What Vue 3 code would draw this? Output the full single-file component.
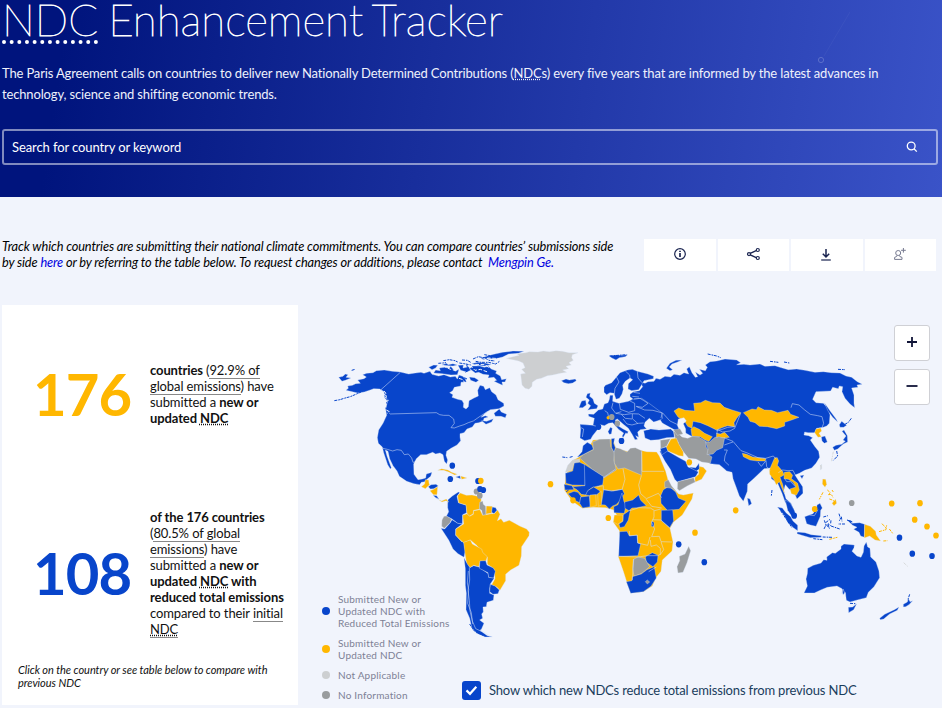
<script setup>
import { ref } from 'vue'

const reduced = ref(true)

const legend = [
  { tone: 'blue', label: 'Submitted New or Updated NDC with Reduced Total Emissions' },
  { tone: 'gold', label: 'Submitted New or Updated NDC' },
  { tone: 'pale', label: 'Not Applicable' },
  { tone: 'grey', label: 'No Information' }
]

// Each region has its own origin; coordinates are in thirds of a pixel.
const regions = [
  {
    name: 'europe-asia', x: 550, y: 350,
    land: [
      ['blue', '240,152 248,146 240,140 240,133 250,125 268,122 278,110 270,95 285,100 294,95 312,94 318,85 330,88 345,79 362,81 372,73 390,76 402,68 416,72 410,57 418,50 426,68 436,82 443,80 436,66 450,75 458,70 448,58 466,62 472,52 466,45 480,35 500,33 525,27 560,30 572,38 560,44 582,43 600,45 630,42 645,49 675,47 690,52 715,59 740,57 765,61 795,67 820,65 845,68 870,69 888,78 905,82 922,95 937,103 921,105 924,112 905,114 912,135 912,160 914,173 900,162 885,145 876,125 878,110 868,108 865,116 848,112 842,123 798,125 788,148 798,158 820,160 834,175 840,195 838,220 830,228 820,232 800,235 794,248 774,248 764,246 762,255 776,257 788,263 781,270 795,290 806,304 809,322 798,340 785,354 764,361 748,370 735,375 744,389 758,410 759,430 741,447 737,438 730,425 717,417 706,404 701,422 708,446 723,460 732,480 731,498 719,480 705,455 696,430 683,400 664,386 662,354 642,356 628,370 609,388 593,402 592,424 580,454 568,438 558,410 549,386 546,367 530,363 519,353 508,344 480,341 466,317 450,303 445,270 400,245 376,241 338,220 290,208 265,200'],
      ['blue', '115,192 131,193 145,180 158,177 163,162 174,158 178,148 180,136 189,136 188,154 207,160 235,154 252,147 275,145 300,162 335,188 338,205 313,220 292,236 271,239 263,246 266,262 257,257 263,268 255,269 247,254 235,235 219,222 202,207 196,210 202,226 218,236 235,245 231,252 228,248 220,262 216,259 221,249 207,239 188,218 176,220 163,227 147,223 144,237 128,257 122,268 104,272 90,264 92,238 90,223 129,226 133,205 116,199'],
      ['blue', '162,112 166,106 185,98 200,80 210,68 232,60 247,58 262,64 294,72 311,79 310,86 282,92 274,106 266,119 245,122 234,117 235,101 248,89 240,84 226,94 218,106 220,118 216,132 208,145 198,148 192,130 180,128 170,134 162,127'],
      ['blue', '112,131 121,129 119,139 129,147 133,160 144,167 140,176 123,178 113,181 122,167 113,160 118,150 108,142'],
      ['blue', '91,162 95,153 107,151 109,165 98,173 87,173'],
      ['blue', '34,92 48,87 58,90 76,87 79,92 68,99 55,101 42,98'],
      ['blue', '178,17 200,15 214,16 233,14 226,20 208,23 198,30 184,23'],
      ['blue', '349,55 360,40 378,31 396,30 385,35 366,42 358,51 368,59 360,62'],
      ['blue', '281,242 302,237 327,240 362,237 371,245 373,262 350,263 325,269 302,271 285,264'],
      ['blue', '208,265 220,263 222,275 214,282 207,276'],
      ['blue', '174,245 181,232 187,235 184,252 178,253'],
      ['gold', '372,183 386,174 405,181 434,183 431,160 452,158 466,151 488,158 510,159 523,172 546,180 573,188 560,205 552,218 554,230 533,227 519,232 499,240 473,227 451,218 429,214 426,235 413,229 404,214 384,201'],
      ['sea', '385,207 402,203 409,213 400,221 407,237 407,255 396,257 389,242 382,226'],
      ['gold', '423,238 431,230 448,238 464,250 487,260 477,274 465,270 451,260 426,259'],
      ['gold', '500,250 511,252 524,247 538,262 518,265 507,260 499,263'],
      ['gold', '580,188 606,177 619,179 624,170 643,180 664,181 683,188 714,181 722,193 747,202 725,210 704,217 704,228 680,236 652,230 628,229 615,218 600,214 594,202'],
      ['grey', '371,244 383,248 396,261 413,265 428,259 447,261 467,274 468,291 475,300 477,315 486,321 481,340 455,336 438,327 416,325 399,304 385,282 375,263'],
      ['grey', '467,275 479,276 495,262 524,263 521,278 518,293 500,301 489,312 471,314 474,298'],
      ['grey', '370,240 390,236 399,252 382,256'],
      ['gold', '577,310 590,313 608,321 627,323 648,326 645,333 622,333 600,330 580,320'],
      ['gold', '668,337 674,323 682,323 686,333 682,346 698,364 702,375 690,382 698,403 704,432 696,415 688,395 679,405 671,388 659,373 658,360'],
      ['gold', '703,367 719,365 728,376 724,386 743,400 748,420 739,436 724,431 720,417 738,411 729,397 715,388 702,386'],
      ['gold', '794,248 798,237 812,234 815,243 807,250 814,260 804,262'],
      ['blue', '814,261 825,258 832,276 823,280 816,273'],
      ['blue', '848,292 858,286 875,283 886,274 879,270 888,258 876,244 882,240 892,257 893,276 880,282 863,297 853,301'],
      ['blue', '868,224 875,214 890,226 881,232 870,232'],
      ['blue', '823,158 840,182 859,208 863,216 848,202 834,183'],
      ['blue', '592,444 600,447 605,461 596,467'],
      ['blue', '750,377 762,375 756,386'],
      ['pale', '811,347 815,342 815,357 811,360'],
      ['sea', '285,217 298,205 311,216 331,210 340,224 331,236 307,234 292,239 282,228']
    ],
    borders: [
      'M189,158 185,174 197,190 214,185M208,160 211,178 236,187 254,182 254,160 240,153M252,147 270,145 280,151 294,160 277,172 258,169M198,190 223,194 244,191 266,192 285,205M164,182 173,188 177,206M247,192 247,206 263,220 281,219M214,193 226,205 246,207M219,207 231,222 246,225 264,220M250,127 270,130M247,139 267,141M93,233 101,237 97,261M129,226 147,231M199,80 207,96 195,115 193,132M226,63 239,75 240,84M262,64 264,84 276,98M260,170 284,180 309,181 337,189 333,204M374,262 386,279M337,188 360,213 383,224',
      'M723,173 727,161 747,165 763,179 781,193 803,197 816,200 821,220 816,233M499,241 514,239 533,232 554,230M500,252 503,239 518,246 540,243 554,235 572,190M524,264 549,274 565,293 573,302 590,308 624,323 647,325 670,318 678,327M523,285 540,279 549,276M522,300 532,300 525,318 523,333 537,346M624,336 634,349 648,332 650,350 660,362M685,368 698,360 714,362 729,361 736,375M704,386 710,395 722,395 736,410'
    ],
    islands: ['M473,12 500,18 512,23M660,34 685,37M702,36 718,39M864,58 885,59M179,18 230,14', 'M904,205 895,217 885,223M860,303 863,318 850,331M666,420 664,438']
  },
  {
    name: 'north-america', x: 325, y: 340,
    land: [
      ['blue', '63,151 70,145 68,138 82,136 92,131 106,130 98,120 117,116 124,111 113,104 125,100 144,98 154,92 178,90 202,94 226,96 251,102 271,99 288,97 297,100 315,94 321,103 341,108 357,104 376,111 391,109 397,117 402,105 413,109 421,116 424,126 408,127 407,138 388,142 383,152 374,158 384,164 381,172 398,178 411,181 416,190 415,202 423,207 430,200 432,182 447,174 460,168 458,151 465,136 476,139 481,149 494,143 500,155 513,165 519,179 536,190 537,198 522,206 496,209 481,219 468,232 481,227 490,231 477,235 475,243 461,248 450,250 442,261 426,267 417,278 405,281 405,291 407,302 396,315 378,325 365,334 363,346 368,360 365,372 358,364 354,344 345,339 332,342 323,337 304,344 287,344 274,356 266,372 267,403 279,419 292,417 302,414 304,402 321,397 317,409 306,418 300,425 289,427 284,434 267,431 245,424 223,409 216,393 204,377 194,356 189,334 181,330 186,348 199,383 196,387 188,374 176,338 172,321 160,310 157,293 161,270 174,250 185,226 182,208 188,184 179,173 177,155 164,147 146,146 136,150 118,156 98,159'],
      ['blue', '41,112 54,109 61,102 69,104 63,112 78,114 61,121 51,124'],
      ['blue', '311,82 326,75 338,76 332,84 321,89'],
      ['blue', '326,99 332,90 346,92 343,84 359,82 373,85 377,79 390,94 402,88 397,104 378,105 352,101'],
      ['blue', '350,75 365,70 369,74 384,71 397,75 384,78 372,77'],
      ['blue', '399,76 415,75 414,84 431,80 437,91 425,96 407,91'],
      ['blue', '434,86 443,78 465,78 478,82 490,79 499,87 515,93 512,100 526,108 530,119 544,116 540,126 531,126 533,136 518,129 507,124 515,121 507,112 489,114 492,105 474,103 461,97 451,99'],
      ['blue', '433,111 449,113 461,121 453,127 437,121'],
      ['blue', '468,54 487,48 506,43 533,37 564,33 597,34 580,40 551,42 533,51 509,57 486,55 474,60'],
      ['blue', '440,71 457,67 484,70 499,74 478,78 458,76'],
      ['blue', '507,220 523,207 529,216 545,223 541,233 528,229 511,229'],
      ['blue', '470,242 485,244 505,236 500,246 483,253'],
      ['gold', '338,391 350,386 369,390 380,397 397,403 389,405 371,396 356,391'],
      ['blue', '392,411 405,407 407,416'],
      ['gold', '407,408 426,414 410,418'],
      ['gold', '289,440 299,432 301,419 311,420 312,429 314,434 301,446'],
      ['blue', '310,440 318,434 333,433 340,438 327,446 316,447'],
      ['gold', '315,452 326,448 338,440 336,464 325,464'],
      ['blue', '324,466 335,467 342,478 333,474']
    ],
    borders: ['M226,97 168,149 178,158M191,218 195,222 334,218 344,224 356,226 372,226 386,237 388,250 378,263 388,264 404,258 417,254 430,248 445,243 465,229 490,213M174,325 187,328 203,333 216,329 229,331 238,344 250,342 260,354 264,367 270,366'],
    islands: [
      'M28,182 45,179 57,175 76,170 90,164 113,154M80,91 90,88',
      'M355,62 373,59 390,62 398,66M340,70 363,68M411,60 427,61 437,67M403,69 423,72 440,76M444,57 460,50 480,54 492,61 510,63M452,64 468,67 491,67 512,72 525,63M478,44 501,48 517,45M446,85 455,94 472,93 481,99M418,113 428,118M425,74 430,91 421,97',
      'M182,151 187,160 182,165 189,174 185,188 189,199M181,204 190,211 194,220'
    ],
    specks: ['M177,153 183,160 177,162 188,171 181,171 190,181 183,185M184,210 193,215 187,220M402,115 414,119 421,132 435,127 456,130M348,65 380,65M354,77 376,88 399,93M435,76 450,91 466,88 488,96M470,58 492,54 525,56M451,73 480,74 493,84']
  },
  {
    name: 'greenland', x: 430, y: 342,
    land: [['pale', '229,49 249,44 267,40 260,35 287,32 298,29 324,30 340,27 358,29 378,26 397,28 417,32 444,32 427,38 425,47 430,55 417,62 424,69 408,73 416,80 398,84 410,91 391,94 368,99 352,101 334,109 320,112 307,121 306,133 297,142 285,139 276,129 274,113 272,96 286,94 275,82 285,77 279,63 266,57 248,53']],
    borders: [], islands: []
  },
  {
    name: 'south-america', x: 420, y: 460,
    land: [
      ['blue', '83,132 84,119 97,108 115,96 119,98 111,109 115,128 139,136 140,158 128,164 127,192 113,190 96,177 79,169 86,155 83,143'],
      ['gold', '113,107 121,99 139,106 156,105 166,107 177,110 184,119 180,135 179,148 161,151 159,162 147,169 141,160 138,135 116,128'],
      ['grey', '179,127 188,123 190,133 197,139 198,165 188,166 185,151 178,147'],
      ['gold', '199,138 217,139 215,160 198,162'],
      ['blue', '217,141 227,143 231,151 222,161 215,157'],
      ['grey', '66,180 72,169 79,168 95,177 90,188 73,205 65,199'],
      ['blue', '63,205 74,207 91,188 96,179 113,190 127,192 107,207 107,226 125,245 131,245 136,272 132,292 114,281 99,267 86,240'],
      ['gold', '131,192 128,166 141,161 149,169 160,163 161,152 180,149 188,166 214,161 223,161 233,150 240,163 232,182 243,176 251,187 268,181 283,189 299,198 320,207 328,217 327,227 319,239 305,260 304,288 297,316 272,330 257,343 257,362 240,391 230,381 215,374 225,356 222,326 202,313 202,292 187,278 170,256 151,240 131,248 121,240 107,225 108,207'],
      ['gold', '131,247 151,240 157,252 185,267 188,277 202,290 198,303 181,303 176,320 161,316 150,323 140,312 136,287'],
      ['blue', '132,293 142,312 150,323 161,317 176,321 205,341 206,352 223,354 211,372 209,387 209,400 222,405 220,421 201,427 199,440 189,441 190,456 185,462 188,475 179,480 192,490 185,506 181,512 202,527 217,531 196,531 170,520 155,502 149,475 138,449 139,400 136,376 136,326'],
      ['blue', '180,303 197,302 201,315 220,324 226,334 221,354 206,352 204,338 178,325'],
      ['blue', '211,373 225,378 238,390 234,401 219,403 209,395'],
      ['gold', '48,114 56,119 65,123 79,117 86,126 78,122 66,126']
    ],
    borders: ['M148,323 149,360 144,391 148,421 150,453 157,483 167,506 184,514M145,333 142,369 146,389 143,430 154,458 158,492M180,509 195,519 209,528'],
    islands: ['M149,492 161,511 178,521 194,528']
  },
  {
    name: 'africa', x: 550, y: 425,
    land: [
      ['gold', '84,98 100,86 118,66 129,45 188,43 198,70 236,80 247,69 270,76 291,80 320,81 328,93 347,139 354,164 363,184 386,207 400,210 430,204 426,222 397,270 370,292 360,310 369,351 366,378 337,405 333,439 317,459 307,483 280,500 242,504 231,473 220,439 205,395 214,364 208,317 190,292 200,270 191,255 168,248 131,247 97,250 66,228 43,195 47,152 66,107'],
      ['grey', '89,99 101,88 130,74 128,51 148,43 180,42 182,65 194,84 192,105 199,135 163,158 128,134'],
      ['grey', '192,78 199,68 211,71 231,81 241,70 256,68 275,77 275,151 224,129 204,132 193,114'],
      ['blue', '82,96 96,80 99,62 112,52 126,60 130,73 101,88 87,95'],
      ['pale', '68,105 89,101 89,111 72,115 66,136 45,143 53,121'],
      ['blue', '73,114 89,112 105,119 105,181 67,180 48,175 46,145 68,138'],
      ['blue', '103,118 161,155 158,179 145,183 128,187 115,196 108,210 94,208 82,195 66,185 105,182'],
      ['blue', '184,41 194,40 191,55 196,68 192,81 185,68'],
      ['blue', '42,178 66,182 72,194 45,195'],
      ['blue', '54,206 72,199 84,202 93,214 89,233 72,225'],
      ['blue', '92,216 118,213 121,245 98,249 89,235'],
      ['blue', '107,210 113,197 131,186 149,197 151,207 120,212'],
      ['gold', '120,210 137,209 139,242 120,247'],
      ['gold', '143,206 154,199 155,240 145,244'],
      ['blue', '161,194 190,198 217,193 223,206 209,228 198,239 188,243 178,252 166,240 154,239'],
      ['blue', '216,204 222,230 228,239 223,265 192,263 191,245 204,239'],
      ['blue', '224,231 248,225 266,210 272,226 289,242 261,248 246,249 237,257 225,250'],
      ['blue', '220,269 241,255 235,285 223,305 210,308 207,297 219,289'],
      ['gold', '193,270 218,270 218,288 202,298 190,290'],
      ['blue', '333,235 332,212 340,194 357,184 377,201 385,219 408,229 387,253 352,256'],
      ['blue', '334,256 368,255 371,288 359,308 334,287'],
      ['blue', '209,320 231,319 238,333 261,330 263,354 272,357 264,392 206,394'],
      ['blue', '286,395 307,383 324,391 322,411 309,425 289,412'],
      ['grey', '250,403 264,396 284,400 299,425 277,444 252,454 248,431'],
      ['blue', '229,470 246,467 247,455 274,447 291,434 313,425 317,449 319,459 303,484 280,500 242,505'],
      ['grey', '286,470 292,465 299,471 292,477'],
      ['grey', '344,170 355,164 365,183 383,204 366,190 344,187'],
      ['grey', '416,364 422,377 411,413 399,442 384,444 381,425 389,407 388,394 405,387'],
      ['blue', '329,79 349,76 385,97 407,109 414,126 434,133 445,141 437,155 410,163 382,171 374,163 361,133 345,109'],
      ['grey', '331,46 361,41 350,64 332,72'],
      ['blue', '331,71 350,65 354,77 335,90'],
      ['gold', '363,42 379,39 386,56 400,81 400,94 387,92 354,78 349,67'],
      ['grey', '383,170 431,158 436,171 413,182 388,197 382,191'],
      ['gold', '447,124 460,127 470,138 455,163 436,171 434,158 446,148'],
      ['blue', '417,126 437,128 447,115 448,132 439,138'],
      ['blue', '305,289 312,292 312,306 304,304']
    ],
    borders: [
      'M275,80 276,139 342,139M274,152 266,180 272,206 289,221 325,205 335,218M219,131 225,163 216,195M160,158 197,132M140,186 160,182 160,194 184,198 215,193M289,223 305,244 335,249M239,257 267,248 301,249 314,257 332,252M312,257 312,276 305,292 314,312 305,335 328,334 333,349M238,318 239,332 262,331 263,354 293,361 300,336M301,345 303,364 319,360 331,370 331,389 341,374 333,350 366,351M331,388 323,392 293,392 264,396 206,394M251,402 247,465M308,284 333,285 359,309M296,440 319,426'
    ],
    islands: ['M37,96 52,98M59,97 70,94M56,195 46,202']
  },
  {
    name: 'oceania', x: 760, y: 440,
    land: [
      ['blue', '52,201 67,204 78,218 92,230 99,243 113,256 113,272 101,264 84,248 72,225'],
      ['blue', '76,180 90,188 104,213 108,234 95,229 83,211'],
      ['blue', '112,276 135,278 154,284 184,287 184,292 151,293 123,285 111,281'],
      ['blue', '134,230 148,225 159,221 170,205 171,195 180,190 187,204 182,211 181,229 174,245 168,259 151,255 140,251'],
      ['gold', '188,117 197,118 200,133 195,142 187,132'],
      ['gold', '216,190 227,177 230,190 222,197'],
      ['blue', '261,240 273,241 275,250 299,248 314,253 313,292 302,288 297,277 281,268 291,262 278,256'],
      ['gold', '314,253 331,259 347,274 349,285 362,303 345,300 329,288 313,294'],
      ['blue', '143,385 160,376 183,369 191,359 201,361 200,351 217,338 226,340 243,327 243,319 252,312 283,315 282,323 276,334 291,348 303,352 310,337 312,318 319,306 323,321 330,325 332,351 348,366 357,393 359,413 342,440 325,457 319,473 295,479 270,486 259,481 256,457 249,464 246,446 231,438 202,442 184,449 163,459 132,459 142,438 138,417 142,401'],
      ['blue', '265,502 278,501 290,491 281,509 266,518'],
      ['blue', '430,493 442,486 445,475 450,485 458,482 447,494 437,500 430,501'],
      ['blue', '359,535 374,523 403,509 417,501 412,511 389,522 371,537 361,539']
    ],
    borders: ['M148,225 163,227 174,209', 'M243,462 249,447 256,463'],
    islands: ['M193,241 198,255 192,267M197,248 210,238M199,254 208,265 203,250 212,257M190,231 204,227M237,221 242,238 237,242M244,230 246,244M213,258 239,267M62,212 95,262M188,291 217,292M212,250 213,240M261,240 278,246M449,463 444,478M255,252 235,252M160,296 187,299M270,490 286,491'],
    goldIslands: ['M202,150 211,158 205,164 214,163 219,172M208,177 220,181 226,190M189,157 178,178M357,275 378,269 380,256M366,251 378,264M388,267 398,280M370,303 383,302M208,298 232,292M216,150 220,156'],
    paleIslands: ['M181,75 185,83M431,368 443,379M220,35 214,66']
  }
]

// [tone, cx, cy, size] in page pixels
const dots = [
  ['blue', 452.3, 465.7], ['blue', 450.3, 479], ['blue', 478, 481], ['gold', 480.8, 480.8], ['grey', 476.5, 491.5],
  ['blue', 480, 489], ['blue', 483.3, 490], ['grey', 479.8, 495.7], ['gold', 550.5, 484.2],
  ['gold', 608.3, 518], ['gold', 573, 500.3], ['gold', 695, 532.7], ['blue', 678.7, 544.3], ['blue', 704.3, 562.2],
  ['gold', 735.7, 510.3], ['grey', 851.7, 503], ['gold', 891.7, 503.5], ['gold', 920, 503.2], ['gold', 914.7, 519.7],
  ['gold', 927, 526.5], ['gold', 936, 535.5], ['blue', 899.5, 537.7], ['blue', 912.3, 553.7], ['blue', 932, 556],
  ['gold', 814.7, 509], ['blue', 794.2, 515.7], ['gold', 689.3, 462.3], ['gold', 608.2, 417.8, 1.7], ['grey', 611.7, 417],
  ['grey', 617.3, 423.5], ['blue', 598.5, 426.8], ['blue', 621.5, 441]
]
</script>

<template>
  <div class="page">
    <header class="hero">
      <svg class="hero-deco" width="50" height="70" viewBox="0 0 50 70" aria-hidden="true">
        <circle cx="21" cy="60" r="2.6" /><path d="M24,56 L50,12" />
      </svg>
      <h1><abbr>NDC</abbr> Enhancement Tracker</h1>
      <p>The Paris Agreement calls on countries to deliver new Nationally Determined Contributions (<abbr>NDC</abbr>s) every five years that are informed by the latest advances in technology, science and shifting economic trends.</p>
      <div class="search">
        <span>Search for country or keyword</span>
        <svg width="12" height="12" viewBox="0 0 12 12"><circle cx="5.2" cy="5" r="3.9" /><path d="M8,7.8 L10.8,10.6" /></svg>
      </div>
    </header>

    <section class="intro">
      <p>Track which countries are submitting their national climate commitments. You can compare countries’ submissions side by side <a>here</a> or by referring to the table below. To request changes or additions, please contact&nbsp; <a>Mengpin Ge.</a></p>
      <div class="tools">
        <button aria-label="Info"><svg width="14" height="14" viewBox="0 0 14 14"><circle cx="7" cy="7" r="5.3" /><path d="M7,6 V10" stroke-width="1.7" /><path d="M7,3.8 V5" stroke-width="1.7" /></svg></button>
        <button aria-label="Share"><svg width="14" height="14" viewBox="0 0 14 14"><path d="M4.2,6.4 L10.2,3.6 M4.2,7.8 L10.2,10.6" stroke-width="1.4" /><circle cx="3" cy="7.1" r="1.5" /><circle cx="11.8" cy="3" r="1.5" /><circle cx="11.8" cy="11" r="1.5" /></svg></button>
        <button aria-label="Download"><svg width="14" height="14" viewBox="0 0 14 14"><path d="M6,2 V9.8 M2.8,6.8 L6,10 L9.2,6.8" stroke-width="1.5" /><path d="M1.2,13 H10.8" /></svg></button>
        <button aria-label="Save" class="muted"><svg width="14" height="14" viewBox="0 0 14 14"><circle cx="5.2" cy="6" r="2.5" /><path d="M4,8.4 L3.6,9.5 L1.6,10.4 V12.4 H9 V10.4 L6.8,9.5 L6.4,8.4 M10.4,1 V5.6 M8.1,3.3 H12.8" /></svg></button>
      </div>
    </section>

    <main class="board">
      <aside class="stats">
        <div class="stat first">
          <strong class="figure gold">176</strong>
          <p><b>countries</b> (<u>92.9% of global emissions</u>) have submitted a <b>new or updated <abbr>NDC</abbr></b></p>
        </div>
        <div class="stat second">
          <strong class="figure blue">108</strong>
          <p><b>of the 176 countries</b> (<u>80.5% of global emissions</u>) have submitted a <b>new or updated <abbr>NDC</abbr> with reduced total emissions</b> compared to their <u>initial <abbr>NDC</abbr></u></p>
        </div>
        <p class="note">Click on the country or see table below to compare with previous NDC</p>
      </aside>

      <section class="map">
        <svg class="world" width="644" height="403" viewBox="298 305 644 403">
          <g v-for="r in regions" :key="r.name" :transform="`translate(${r.x} ${r.y}) scale(.33333)`">
            <polygon v-for="(s, i) in r.land" :key="i" :class="s[0]" :points="s[1]" />
            <path v-for="(b, i) in r.borders" :key="'b' + i" class="border" :d="b" />
            <path v-for="(b, i) in r.islands" :key="'i' + i" class="isles" :d="b" />
            <path v-for="(b, i) in r.specks || []" :key="'s' + i" class="specks" :d="b" />
            <path v-for="(b, i) in r.goldIslands || []" :key="'g' + i" class="isles gold-line" :d="b" />
            <path v-for="(b, i) in r.paleIslands || []" :key="'p' + i" class="isles pale-line" :d="b" />
          </g>
          <ellipse v-for="(d, i) in dots" :key="i" :class="d[0]" :cx="d[1]" :cy="d[2]" :rx="d[3] || 2.8" :ry="d[3] || 3.1" />
        </svg>
        <div class="zoom">
          <button aria-label="Zoom in"><svg width="14" height="14" viewBox="0 0 14 14"><path d="M7,1 V11 M2,6 H12" /></svg></button>
          <button aria-label="Zoom out"><svg width="14" height="14" viewBox="0 0 14 14"><path d="M1.5,6 H12.5" /></svg></button>
        </div>
        <div class="bottom">
          <ul class="legend">
            <li v-for="l in legend" :key="l.label"><i :class="l.tone"></i><span>{{ l.label }}</span></li>
          </ul>
          <label class="toggle" @click="reduced = !reduced">
            <span class="box"><svg v-if="reduced" width="13" height="11" viewBox="0 0 13 11"><path d="M1.5,5.4 L5,8.8 L11.3,1.8" /></svg></span>
            Show which new NDCs reduce total emissions from previous NDC
          </label>
        </div>
      </section>
    </main>
  </div>
</template>

<style>
body { background: #f1f4fc; overflow: hidden; }
</style>

<style scoped>
* { box-sizing: border-box; }
.page { width: 942px; height: 708px; overflow: hidden; font-family: Lato, "Liberation Sans", sans-serif; color: #111; background: #f1f4fc; font-variant-ligatures: none; }
p, h1, ul { margin: 0; padding: 0; }
button { border: 0; background: #fff; padding: 0; display: flex; align-items: center; justify-content: center; }
svg { fill: none; display: block; }
abbr { text-decoration: underline dotted; }

.hero { position: relative; height: 197px; padding: 0 4px 0 2px; color: #fff; background: linear-gradient(98deg, #00147d 7%, #3a53c8 100%); }
.hero-deco { position: absolute; left: 800px; top: 0; stroke: #fff; opacity: .2; }
.hero-deco path { opacity: .2; }
.hero h1 { height: 63px; font-size: 43.9px; line-height: 38px; font-weight: 100; white-space: nowrap; word-spacing: -2.5px; -webkit-text-stroke: .8px #fff; }
.hero h1 abbr { text-decoration-thickness: 4px; text-underline-offset: 4px; }
.hero p { height: 66px; width: 900px; font-size: 13px; line-height: 21px; letter-spacing: -.15px; color: #eef1fc; }
.search { height: 36px; border: 2px solid rgba(255, 255, 255, .5); border-radius: 3px; display: flex; align-items: center; justify-content: space-between; padding: 0 18px 0 8px; font-size: 13px; letter-spacing: -.1px; }
.search svg { stroke: #fff; stroke-width: 1.3; }

.intro { height: 108px; padding: 41px 6px 0 2px; display: flex; justify-content: space-between; align-items: flex-start; }
.intro p { width: 624px; font-size: 12.8px; line-height: 16px; letter-spacing: -.13px; font-style: italic; color: #000; }
.intro a { color: #0000e0; }
.tools { display: grid; grid-template-columns: repeat(4, 1fr); gap: 2px; width: 292px; margin-top: 1px; }
.tools button { height: 32px; padding-bottom: 2px; }
.tools svg { stroke: #1a2450; stroke-width: 1.2; }
.tools .muted svg { stroke: #777b91; stroke-width: 1; }

.board { display: flex; height: 403px; padding-left: 2px; }
.stats { width: 296px; height: 400px; background: #fff; }
.stat { display: flex; align-items: center; padding-left: 31px; }
.stat p { width: 140px; margin-left: 19px; font-size: 13px; line-height: 16px; letter-spacing: -.11px; }
.figure { width: 98px; font-size: 58px; line-height: 64px; font-weight: 700; letter-spacing: -.9px; }
.figure.gold { color: #ffb700; }
.figure.blue { color: #0845cb; }
.first { padding-top: 57px; }
.second { padding-top: 83px; }
u { text-decoration: none; border-bottom: 1px solid #888; }
.note { padding: 26px 20px 0 16px; font-size: 11px; line-height: 13px; letter-spacing: -.05px; font-style: italic; }

.map { position: relative; width: 644px; }
.world { position: absolute; left: 0; top: 0; }
.world polygon { stroke: #dce6f8; stroke-width: 1; stroke-linejoin: round; }
.world .blue { fill: #0845cb; }
.world .gold { fill: #ffb700; }
.world .grey { fill: #999c9e; }
.world .pale { fill: #cdcfd1; }
.world .sea { fill: #f1f4fc; }
.world .border { stroke: #d5e0f7; stroke-width: 1.6; stroke-linejoin: round; }
.world .isles { stroke: #0845cb; stroke-width: 3; stroke-dasharray: 9 3 5 2; }
.world .specks { stroke: #f1f4fc; stroke-width: 3; stroke-dasharray: 11 5; }
.world .gold-line { stroke: #ffb700; }
.world .pale-line { stroke: #d7d9da; stroke-width: 3; }
.zoom { position: absolute; right: 12px; top: 20px; display: grid; gap: 8px; }
.zoom button { width: 36px; height: 36px; border: 1px solid #cfd0d5; border-radius: 3px; }
.zoom svg { stroke: #111538; stroke-width: 1.8; }
.bottom { position: absolute; left: 24px; bottom: 7px; display: flex; align-items: flex-end; }
.legend { list-style: none; width: 140px; display: grid; gap: 8px; font-size: 10px; line-height: 12px; color: #7d8195; letter-spacing: .2px; }
.legend li { display: flex; align-items: center; gap: 8px; }
.legend i { flex: none; width: 8px; height: 8px; border-radius: 50%; }
.legend span { width: 116px; }
.legend .blue { background: #0845cb; }
.legend .gold { background: #ffb700; }
.legend .pale { background: #cdcfd1; }
.legend .grey { background: #999c9e; }
.toggle { display: flex; align-items: center; gap: 8px; font-size: 13px; line-height: 19px; letter-spacing: -.17px; color: #1a3d5c; white-space: nowrap; margin-bottom: 1px; }
.box { width: 19px; height: 19px; border-radius: 3px; background: #0845cb; display: flex; align-items: center; justify-content: center; }
.box svg { stroke: #fff; stroke-width: 2.2; }
</style>
